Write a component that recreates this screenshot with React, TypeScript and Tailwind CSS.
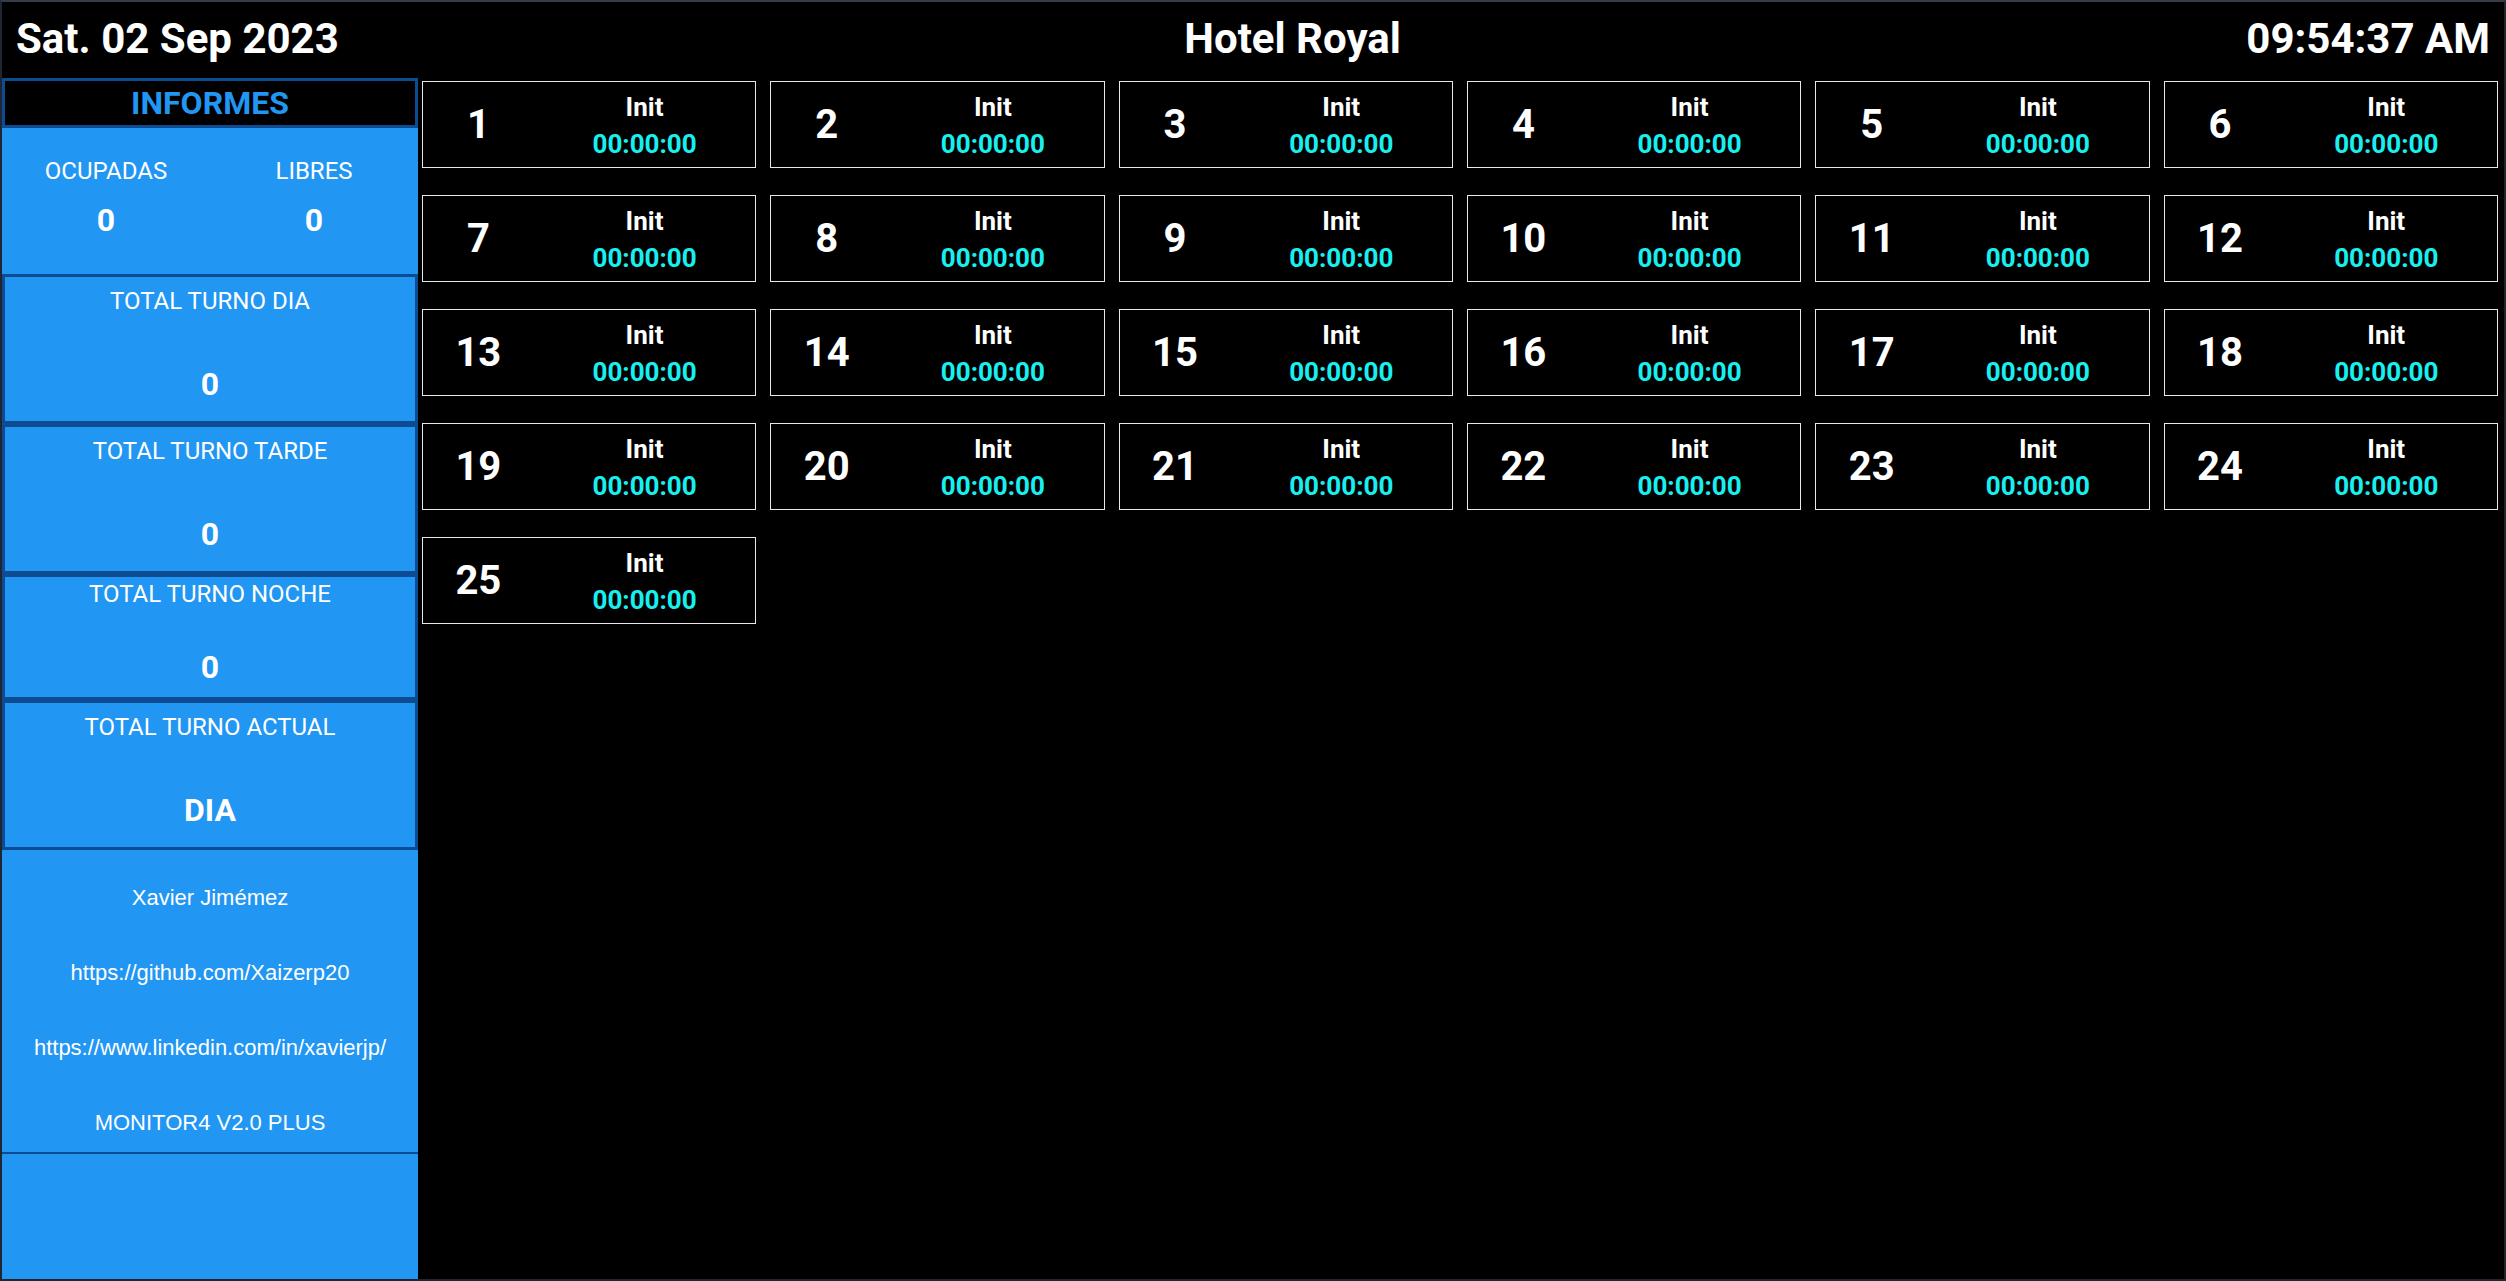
const rooms = Array.from({ length: 25 }, (_, i) => i + 1);

function TurnoBox({
  title,
  value,
  height,
  padTop,
  gap,
}: {
  title: string;
  value: string;
  height: string;
  padTop: string;
  gap: string;
}) {
  return (
    <div className={`${height} ${padTop} border-[3px] border-[#0d4c92] flex flex-col items-center text-white`}>
      <div className="text-[24px] leading-[28px]">{title}</div>
      <div className={`${gap} text-[32px] leading-[38px] font-bold`}>{value}</div>
    </div>
  );
}

function RoomCard({ n }: { n: number }) {
  return (
    <div className="h-[87px] border border-[#e8e8e8] bg-black grid grid-cols-3 items-center">
      <div className="text-center text-white text-[40px] font-bold leading-none">{n}</div>
      <div className="col-span-2 flex flex-col items-center pt-[3px]">
        <div className="text-white text-[26px] font-bold leading-[37px]">Init</div>
        <div className="text-[#18f0f0] text-[26px] font-bold leading-[37px]">00:00:00</div>
      </div>
    </div>
  );
}

export default function App() {
  return (
    <div className="h-screen w-full bg-black border-[2px] border-[#1f2533] border-t-[#353b47] flex flex-col overflow-hidden font-['Roboto',sans-serif]">
      {/* header */}
      <header className="h-[76px] shrink-0 px-[14px] pt-[12px] flex items-start justify-between text-white text-[42px] font-bold leading-[49px]">
        <span>Sat. 02 Sep 2023</span>
        <span>Hotel Royal</span>
        <span>09:54:37 AM</span>
      </header>

      <div className="flex flex-1 min-h-0">
        {/* sidebar */}
        <aside className="w-[416px] shrink-0 bg-[#2196f3] flex flex-col">
          <div className="h-[50px] border-[3px] border-[#0d4c92] bg-black flex items-center justify-center">
            <span className="text-[#2196f3] text-[32px] font-bold leading-none">INFORMES</span>
          </div>

          <div className="h-[146px] grid grid-cols-2 pt-[29px] text-white">
            <div className="flex flex-col items-center">
              <div className="text-[24px] leading-[28px]">OCUPADAS</div>
              <div className="mt-[16px] text-[32px] leading-[38px] font-bold">0</div>
            </div>
            <div className="flex flex-col items-center">
              <div className="text-[24px] leading-[28px]">LIBRES</div>
              <div className="mt-[16px] text-[32px] leading-[38px] font-bold">0</div>
            </div>
          </div>

          <TurnoBox title="TOTAL TURNO DIA" value="0" height="h-[150px]" padTop="pt-[10px]" gap="mt-[50px]" />
          <TurnoBox title="TOTAL TURNO TARDE" value="0" height="h-[150px]" padTop="pt-[10px]" gap="mt-[50px]" />
          <TurnoBox title="TOTAL TURNO NOCHE" value="0" height="h-[126px]" padTop="pt-[3px]" gap="mt-[40px]" />
          <TurnoBox title="TOTAL TURNO ACTUAL" value="DIA" height="h-[150px]" padTop="pt-[10px]" gap="mt-[50px]" />

          <div className="h-[304px] border-b-2 border-[#0d4c92] pt-[35px] flex flex-col items-center gap-[49px] text-white text-[22px] leading-[26px] font-['Liberation_Sans',Arial,sans-serif]">
            <div>Xavier Jimémez</div>
            <div>https://github.com/Xaizerp20</div>
            <div>https://www.linkedin.com/in/xavierjp/</div>
            <div>MONITOR4 V2.0 PLUS</div>
          </div>

          <div className="flex-1" />
        </aside>

        {/* rooms */}
        <main className="flex-1 pl-[4px] pr-[6px] pt-[3px]">
          <div className="grid grid-cols-6 gap-x-[14px] gap-y-[27px]">
            {rooms.map((n) => (
              <RoomCard key={n} n={n} />
            ))}
          </div>
        </main>
      </div>
    </div>
  );
}
